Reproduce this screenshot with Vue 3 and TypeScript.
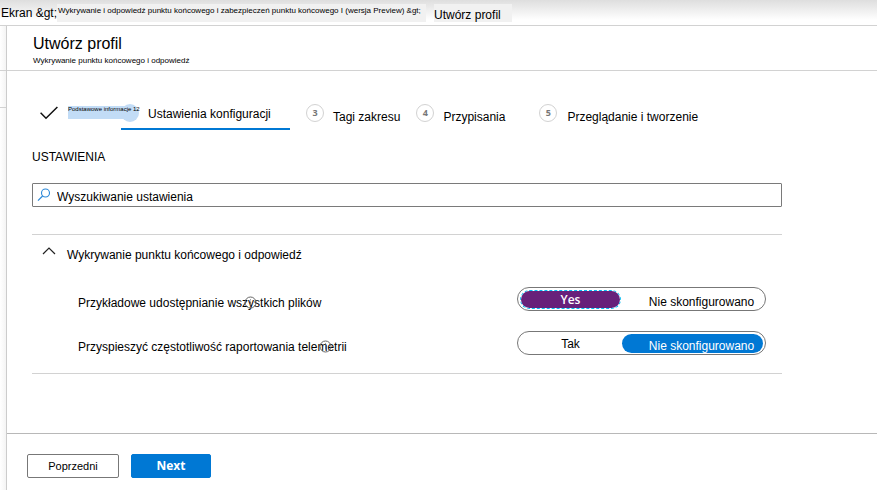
<script setup lang="ts">
import { reactive, ref } from 'vue'

interface Step {
  num: number
  label: string
}

interface Setting {
  id: string
  label: string
  value: 'yes' | 'none'
  yesText: string
  infoClass: string
}

const upcoming: Step[] = [
  { num: 3, label: 'Tagi zakresu' },
  { num: 4, label: 'Przypisania' },
  { num: 5, label: 'Przeglądanie i tworzenie' },
]

const settings = reactive<Setting[]>([
  {
    id: 'sharing',
    label: 'Przykładowe udostępnianie wszystkich plików',
    value: 'yes',
    yesText: 'Yes',
    infoClass: 'info-sharing',
  },
  {
    id: 'telemetry',
    label: 'Przyspieszyć częstotliwość raportowania telemetrii',
    value: 'none',
    yesText: 'Tak',
    infoClass: 'info-telemetry',
  },
])

const search = ref('')
const expanded = ref(true)
</script>

<template>
  <div class="page">
    <nav class="crumbs">
      <a class="crumb" href="#">Ekran &amp;gt;</a>
      <a class="crumb crumb-small" href="#">Wykrywanie i odpowiedź punktu końcowego i zabezpieczeń punktu końcowego I (wersja Preview) &amp;gt;</a>
      <span class="crumb crumb-current">Utwórz profil</span>
    </nav>

    <div class="body">
      <div class="rail"><div class="rail-head"></div><div class="rail-row"></div></div>
      <section class="panel">
        <header class="head">
          <h1>Utwórz profil</h1>
          <p>Wykrywanie punktu końcowego i odpowiedź</p>
        </header>

        <main class="content">
          <ol class="steps">
            <li class="step done">
              <svg class="check" viewBox="0 0 18 14" width="18" height="14" aria-hidden="true">
                <path d="M0.6 6.8 L6 12.3 L17.4 1" fill="none" stroke="#111" stroke-width="1.5" />
              </svg>
              <a class="done-label" href="#">Podstawowe informacje 12</a>
            </li>
            <li class="step active"><a href="#">Ustawienia konfiguracji</a></li>
            <li v-for="s in upcoming" :key="s.num" class="step next">
              <span class="num">{{ s.num }}</span>
              <a href="#">{{ s.label }}</a>
            </li>
          </ol>

          <h2>USTAWIENIA</h2>

          <label class="search">
            <svg viewBox="0 0 14 14" width="14" height="14" aria-hidden="true">
              <circle cx="8.5" cy="5" r="4" fill="none" stroke="#2b88d8" stroke-width="1.1" />
              <path d="M5.6 8 L1 12.6" fill="none" stroke="#2b88d8" stroke-width="1.2" />
            </svg>
            <input v-model="search" type="text" placeholder="Wyszukiwanie ustawienia" aria-label="Wyszukiwanie ustawienia" />
          </label>

          <section class="group">
            <button class="group-head" type="button" :aria-expanded="expanded" @click="expanded = !expanded">
              <svg viewBox="0 0 14 8" width="14" height="8" aria-hidden="true">
                <path d="M1 7 L7 1 L13 7" fill="none" stroke="#222" stroke-width="1.2" />
              </svg>
              <span>Wykrywanie punktu końcowego i odpowiedź</span>
            </button>
            <template v-if="expanded">
              <div v-for="s in settings" :key="s.id" class="row">
                <span :id="s.id" class="row-label">
                  {{ s.label }}
                  <svg class="info" :class="s.infoClass" viewBox="0 0 13 13" width="13" height="13" aria-hidden="true">
                    <circle cx="6.5" cy="6.5" r="5.5" fill="none" stroke="#666" stroke-width="1" />
                    <path d="M6.5 5.5 V9.5 M6.5 3.3 V4.4" stroke="#777" stroke-width="1" />
                  </svg>
                </span>
                <div class="toggle" role="radiogroup" :aria-labelledby="s.id">
                  <label class="opt opt-yes">
                    <input v-model="s.value" type="radio" :name="s.id" value="yes" />
                    <span>{{ s.yesText }}</span>
                  </label>
                  <label class="opt opt-none">
                    <input v-model="s.value" type="radio" :name="s.id" value="none" />
                    <span>Nie skonfigurowano</span>
                  </label>
                </div>
              </div>
            </template>
          </section>
        </main>

        <footer class="foot">
          <button class="btn" type="button">Poprzedni</button>
          <button class="btn primary" type="button">Next</button>
        </footer>
      </section>
    </div>
  </div>
</template>

<style>
body {
  margin: 0;
  background: #fff;
}
</style>

<style scoped>
.page {
  display: flex;
  flex-direction: column;
  min-height: 100vh;
  font-family: "Liberation Sans", Arial, sans-serif;
  font-size: 12px;
  line-height: 16px;
  color: #000;
}
.page * {
  box-sizing: border-box;
}
a {
  color: inherit;
  text-decoration: none;
}
button,
input {
  font: inherit;
  color: inherit;
}

.crumbs {
  display: flex;
  align-items: flex-start;
  height: 26px;
  padding: 4px 1px 0;
  border-bottom: 1px solid #d2d2d2;
  background: linear-gradient(#dedede, #fff 20px);
  white-space: nowrap;
}
.crumb {
  height: 18px;
  line-height: 18px;
}
.crumb-small {
  width: 369px;
  padding-left: 1px;
  font-size: 8px;
  line-height: 13px;
  background: #f1f1f1;
}
.crumb-current {
  width: 78px;
  margin-left: 8px;
  line-height: 22px;
  background: #f1f1f1;
}

.body {
  display: flex;
  flex: 1;
}
.rail {
  width: 7px;
  border-right: 1px solid #ccc;
  background: linear-gradient(90deg, #fff, #f4f4f4);
}
.rail-head {
  height: 45px;
  border-bottom: 1px solid #d2d2d2;
}
.rail-row {
  height: 37px;
  border-bottom: 1px solid #d2d2d2;
}
.panel {
  display: flex;
  flex: 1;
  flex-direction: column;
}
.head {
  height: 45px;
  padding: 8px 26px 0;
  border-bottom: 1px solid #d2d2d2;
}
.head h1 {
  margin: 0;
  font-size: 16px;
  font-weight: 400;
  line-height: 20px;
}
.head p {
  margin: 0;
  font-size: 8px;
  line-height: 14px;
}

.content {
  flex: 1;
  max-width: 775px;
  padding: 33px 0 0 25px;
}
.steps {
  display: flex;
  align-items: flex-start;
  height: 26px;
  margin: 0;
  padding: 0;
  list-style: none;
  white-space: nowrap;
}
.step {
  display: flex;
}
.done {
  width: 89px;
  padding-left: 8px;
}
.check {
  flex: none;
  margin-top: 2px;
}
.done-label {
  position: relative;
  z-index: 0;
  flex: none;
  width: 62px;
  height: 13px;
  margin: 2px 0 0 10px;
  font-size: 6px;
  line-height: 6px;
  background: #c2dcf6;
}
.done-label::after {
  content: "";
  position: absolute;
  z-index: -1;
  right: -9px;
  top: -2px;
  width: 18px;
  height: 18px;
  border-radius: 50%;
  background: #c2dcf6;
}
.active {
  width: 169px;
  height: 26px;
  padding: 2px 0 0 27px;
  border-bottom: 2px solid #0078d4;
}
.next {
  margin-left: 16px;
  gap: 9px;
}
.next:last-child {
  margin-left: 34px;
  gap: 10px;
}
.next a {
  padding-top: 5px;
}
.num {
  width: 18px;
  height: 18px;
  border: 1px solid #d2d2d2;
  border-radius: 50%;
  font-family: "Open Sans", sans-serif;
  font-size: 9px;
  font-weight: 700;
  line-height: 16px;
  text-align: center;
  color: #777;
}

h2 {
  margin: 19px 0 0;
  font-size: 12px;
  font-weight: 400;
  line-height: 16px;
}
.search {
  display: flex;
  align-items: center;
  gap: 6px;
  height: 24px;
  margin-top: 18px;
  padding: 0 4px;
  border: 1px solid #7a7a7a;
  border-radius: 1px;
}
.search input {
  flex: 1;
  min-width: 0;
  padding: 3px 0 0;
  border: 0;
  outline: 0;
  background: none;
}
.search input::placeholder {
  color: #000;
  opacity: 1;
}

.group {
  margin-top: 27px;
  padding-bottom: 18px;
  border-top: 1px solid #d2d2d2;
  border-bottom: 1px solid #d2d2d2;
}
.group-head {
  display: flex;
  align-items: flex-start;
  gap: 11px;
  width: 100%;
  margin-bottom: 24px;
  padding: 12px 0 0 10px;
  border: 0;
  background: none;
  text-align: left;
}
.row {
  display: flex;
  align-items: center;
  justify-content: space-between;
  padding: 0 16px 0 46px;
}
.row + .row {
  margin-top: 20px;
}
.row-label {
  position: relative;
  padding-top: 8px;
}
.info {
  position: absolute;
  top: 9px;
}
.info-sharing {
  left: 166px;
}
.info-telemetry {
  left: 241px;
}
.toggle {
  display: flex;
  width: 249px;
  height: 24px;
  padding: 2px 2px 1px;
  border: 1px solid #777;
  border-radius: 12px;
}
.opt {
  position: relative;
  display: flex;
  justify-content: center;
}
.opt-yes {
  flex: 0 0 101px;
}
.opt-none {
  flex: 1;
  margin-left: 1px;
}
.opt input {
  position: absolute;
  inset: 0;
  width: 100%;
  height: 100%;
  margin: 0;
  border-radius: 10px;
  appearance: none;
}
.opt input:checked {
  background: #0078d4;
}
.opt-yes input:checked {
  border: 1px dashed #00bcf2;
  background: #68217a padding-box;
}
.opt span {
  position: relative;
  line-height: 20px;
}
.opt-none span {
  padding: 2px 0 0 18px;
}
.opt input:checked + span {
  color: #fff;
}
.opt-yes input:checked + span {
  font-family: "Open Sans", sans-serif;
  font-weight: 600;
}

.foot {
  display: flex;
  align-items: flex-start;
  gap: 12px;
  height: 57px;
  padding: 20px 20px 0;
  border-top: 1px solid #b8b8b8;
}
.btn {
  width: 92px;
  height: 24px;
  padding: 0;
  border: 1px solid #777;
  border-radius: 2px;
  background: #fff;
  font-size: 11px;
}
.primary {
  width: 80px;
  border-color: #0078d4;
  background: #0078d4;
  color: #fff;
  font-family: "Open Sans", sans-serif;
  font-size: 12px;
  font-weight: 700;
}
</style>
